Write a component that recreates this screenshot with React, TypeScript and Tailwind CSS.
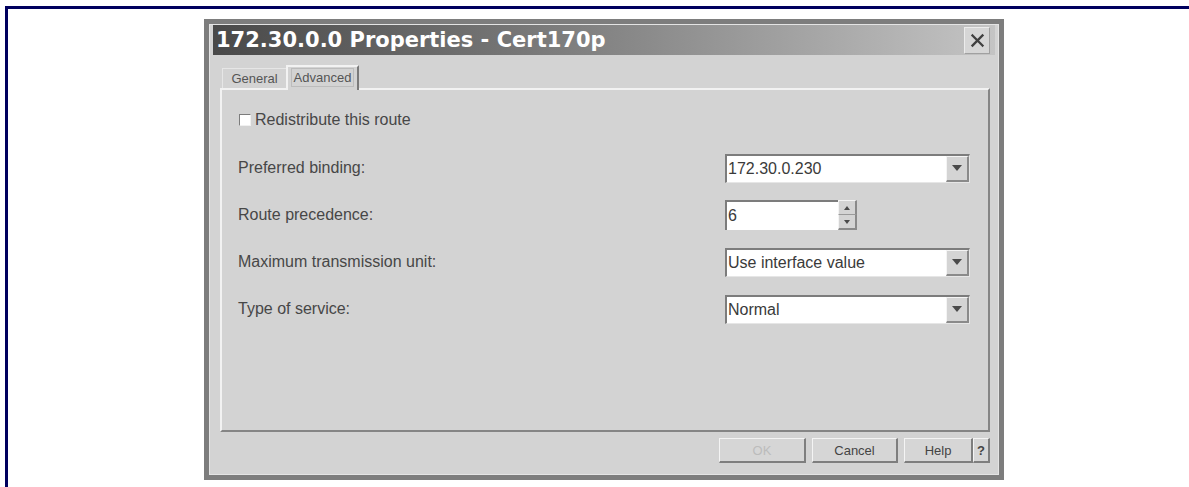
import React from "react";

function DownArrow() {
  return (
    <svg width="10" height="6" viewBox="0 0 10 6" aria-hidden="true">
      <path d="M0 0 H10 L5 6 Z" fill="#4a4a4a" />
    </svg>
  );
}

function ComboBox({ value }: { value: string }) {
  return (
    <div className="flex h-[29px] w-[245px] border-t-2 border-l-2 border-r border-b border-t-[#7c7c7c] border-l-[#7c7c7c] border-r-[#e6e6e6] border-b-[#e6e6e6] bg-white">
      <div className="flex flex-1 items-center pl-[1px] text-[16px] leading-none text-[#3a3a3a]">{value}</div>
      <div className="flex w-[23px] items-center justify-center border-t border-l border-r-2 border-b-2 border-t-[#f4f4f4] border-l-[#f4f4f4] border-r-[#8a8a8a] border-b-[#8a8a8a] bg-[#d4d4d4]">
        <DownArrow />
      </div>
    </div>
  );
}

function Spinner({ value }: { value: string }) {
  return (
    <div className="flex w-[245px]">
      <div className="flex h-[30px] w-[113px] items-center border-t-2 border-l-2 border-t-[#7c7c7c] border-l-[#7c7c7c] bg-white pl-[1px] text-[16px] leading-none text-[#3a3a3a]">
        {value}
      </div>
      <div className="flex h-[30px] w-[19px] flex-col">
        <div className="flex flex-1 items-center justify-center border-t border-l border-r-2 border-b border-t-[#f4f4f4] border-l-[#f4f4f4] border-r-[#8a8a8a] border-b-[#9a9a9a] bg-[#d4d4d4]">
          <svg width="6" height="4" viewBox="0 0 6 4" aria-hidden="true">
            <path d="M0 4 H6 L3 0 Z" fill="#4a4a4a" />
          </svg>
        </div>
        <div className="flex flex-1 items-center justify-center border-l border-r-2 border-b-2 border-l-[#f4f4f4] border-r-[#8a8a8a] border-b-[#8a8a8a] bg-[#d4d4d4]">
          <svg width="6" height="4" viewBox="0 0 6 4" aria-hidden="true">
            <path d="M0 0 H6 L3 4 Z" fill="#4a4a4a" />
          </svg>
        </div>
      </div>
    </div>
  );
}

function FieldRow({ label, children }: { label: string; children: React.ReactNode }) {
  return (
    <div className="flex h-[30px] items-center justify-between">
      <span className="text-[16px] leading-none text-[#474747]">{label}</span>
      {children}
    </div>
  );
}

function PushButton({
  children,
  width,
  disabled,
}: {
  children: React.ReactNode;
  width: string;
  disabled?: boolean;
}) {
  return (
    <button
      type="button"
      className={`flex h-[25px] ${width} items-center justify-center border-t border-l border-r-2 border-b-2 border-t-[#f4f4f4] border-l-[#f4f4f4] border-r-[#7e7e7e] border-b-[#7e7e7e] bg-[#d6d6d6] text-[13px] leading-none ${
        disabled ? "text-[#bcbcbc]" : "text-[#444]"
      }`}
    >
      {children}
    </button>
  );
}

export default function App() {
  return (
    <div className="h-[487px] w-[1189px] overflow-hidden bg-white pt-[6px] pl-[5px] font-['Liberation_Sans',Arial,sans-serif]">
      <div className="h-full border-t-[3px] border-l-[3px] border-[#00005e] pt-[10px] pl-[196px]">
        {/* Properties dialog */}
        <div className="h-[461px] w-[800px] border-[5px] border-[#7d7d7d] bg-[#d3d3d3]">
          <div className="flex h-full flex-col border border-[#e4e4e4] px-[3px]">
            {/* Title bar */}
            <div className="flex h-[30px] shrink-0 items-center justify-between bg-linear-to-r from-[#494949] to-[#c4c4c4] pl-[3px] pr-[5px]">
              <span className="font-['DejaVu_Sans',sans-serif] text-[21px] font-bold leading-none text-white">
                172.30.0.0 Properties - Cert170p
              </span>
              <div className="flex h-[27px] w-[26px] items-center justify-center border-t border-l border-r border-b border-t-[#ececec] border-l-[#ececec] border-r-[#a0a0a0] border-b-[#a0a0a0] bg-[#d6d6d6]">
                <svg width="15" height="15" viewBox="0 0 15 15" aria-hidden="true">
                  <path d="M2.5 2.5 L12.5 12.5 M12.5 2.5 L2.5 12.5" stroke="#404040" strokeWidth="2.3" strokeLinecap="square" />
                </svg>
              </div>
            </div>

            {/* Tabs */}
            <div className="mt-[10px] flex h-[23px] shrink-0 items-end pl-[9px]">
              <div className="flex h-[20px] w-[64px] items-center justify-center border-t border-l border-t-[#e6e6e6] border-l-[#e6e6e6] text-[13px] leading-none text-[#555]">
                General
              </div>
              <div className="relative z-10 -mb-[2px] flex h-[25px] w-[73px] items-start justify-center border-t-2 border-l-2 border-r-2 border-t-[#f2f2f2] border-l-[#f2f2f2] border-r-[#7a7a7a] bg-[#d3d3d3] pt-[1px]">
                <span className="border border-[#bcbcbc] px-[2px] py-[2px] text-[13px] leading-none text-[#555]">
                  Advanced
                </span>
              </div>
            </div>

            {/* Tab panel */}
            <div className="ml-[7px] mr-[5px] h-[344px] shrink-0 border-t-2 border-l-2 border-r-2 border-b-2 border-t-[#f2f2f2] border-l-[#f2f2f2] border-r-[#858585] border-b-[#858585] pt-[23px] pl-[16px] pr-[18px]">
              <label className="flex h-[14px] items-center">
                <span className="ml-[1px] h-[12px] w-[12px] shrink-0 border-t border-l border-t-[#7c7c7c] border-l-[#7c7c7c] border-r border-b border-r-[#f0f0f0] border-b-[#f0f0f0] bg-white" />
                <span className="ml-[4px] text-[16px] leading-none text-[#474747]">Redistribute this route</span>
              </label>

              <div className="mt-[26px] flex flex-col gap-[17px]">
                <FieldRow label="Preferred binding:">
                  <ComboBox value="172.30.0.230" />
                </FieldRow>
                <FieldRow label="Route precedence:">
                  <Spinner value="6" />
                </FieldRow>
                <FieldRow label="Maximum transmission unit:">
                  <ComboBox value="Use interface value" />
                </FieldRow>
                <FieldRow label="Type of service:">
                  <ComboBox value="Normal" />
                </FieldRow>
              </div>
            </div>

            {/* Dialog buttons */}
            <div className="mt-[6px] mr-[5px] flex shrink-0 justify-end">
              <PushButton width="w-[87px]" disabled>
                OK
              </PushButton>
              <div className="ml-[6px]">
                <PushButton width="w-[86px]">Cancel</PushButton>
              </div>
              <div className="ml-[6px] flex">
                <PushButton width="w-[69px]">Help</PushButton>
                <PushButton width="w-[17px]">
                  <span className="font-bold">?</span>
                </PushButton>
              </div>
            </div>
          </div>
        </div>
      </div>
    </div>
  );
}
